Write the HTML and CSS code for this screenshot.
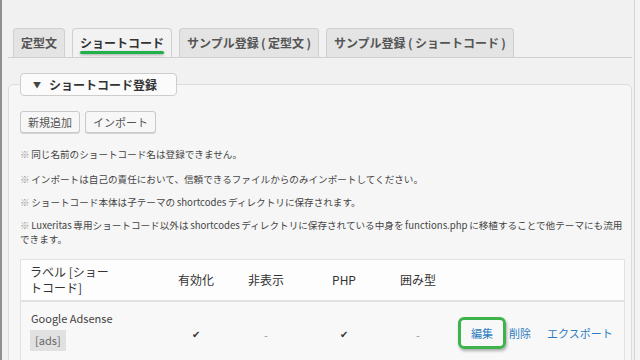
FILE: index.html
```html
<!DOCTYPE html>
<html lang="ja">
<head>
<meta charset="utf-8">
<title>Luxeritas 定型文登録</title>
<link rel="stylesheet" href="styles.css">
</head>
<body>
<div class="screen">
  <main class="main">
    <h1 class="title">Luxeritas 定型文登録</h1>
    <nav class="tabs">
      <a class="tab">定型文</a>
      <a class="tab active"><span class="tab-label">ショートコード</span></a>
      <a class="tab">サンプル登録&thinsp;(&thinsp;定型文&thinsp;)</a>
      <a class="tab">サンプル登録&thinsp;(&thinsp;ショートコード&thinsp;)</a>
    </nav>
    <section class="panel">
      <h2 class="panel-head"><span class="caret">▼</span>ショートコード登録</h2>
      <div class="buttons">
        <button class="btn">新規追加</button>
        <button class="btn">インポート</button>
      </div>
      <div class="notes">
        <p><span class="mark">※</span> 同じ名前のショートコード名は登録できません。</p>
        <p><span class="mark">※</span> インポートは自己の責任において、信頼できるファイルからのみインポートしてください。</p>
        <p><span class="mark">※</span> ショートコード本体は子テーマの shortcodes ディレクトリに保存されます。</p>
        <p><span class="mark">※</span> Luxeritas 専用ショートコード以外は shortcodes ディレクトリに保存されている中身を functions.php に移植することで他テーマにも流用できます。</p>
      </div>
      <div class="table">
        <div class="row head">
          <div class="cell label"><span class="label-text">ラベル [ショートコード]</span></div>
          <div class="cell center">有効化</div>
          <div class="cell center">非表示</div>
          <div class="cell center">PHP</div>
          <div class="cell center">囲み型</div>
          <div class="cell"></div>
        </div>
        <div class="row body">
          <div class="cell label top">
            <div class="name">Google Adsense</div>
            <code class="code">[ads]</code>
          </div>
          <div class="cell center check">✔</div>
          <div class="cell center dash">-</div>
          <div class="cell center check">✔</div>
          <div class="cell center dash">-</div>
          <div class="cell actions">
            <a class="link edit">編集</a>
            <a class="link">削除</a>
            <a class="link">エクスポート</a>
          </div>
        </div>
      </div>
    </section>
  </main>
  <div class="rail"></div>
</div>
</body>
</html>
```

FILE: styles.css
```css
html, body {
  margin: 0;
  height: 360px;
  overflow: hidden;
}
body {
  background: #f1f1f1;
  font-family: "Noto Sans CJK JP", sans-serif;
  color: #444;
}
.screen {
  display: flex;
  height: 360px;
  border-left: 2px solid #8f8f8f;
}
.main {
  flex: 1;
  min-width: 0;
  padding-left: 6px;
}
.rail {
  width: 5px;
  margin-left: 2px;
  border-left: 1px solid #d4d4d4;
  background: #f3f3f3;
}
.title {
  margin: -23px 0 0;
  font-size: 20px;
  line-height: 24px;
  font-weight: 600;
  color: #23282d;
}
.tabs {
  display: flex;
  gap: 7px;
  margin-top: 27px;
  padding-left: 5px;
  border-bottom: 1px solid #d0d0d0;
}
.tab {
  display: block;
  font-size: 12px;
  font-weight: bold;
  line-height: 18px;
  padding: 5px 7px;
  border: 1px solid #cfcfcf;
  border-bottom: none;
  border-radius: 4px 4px 0 0;
  background: #e4e4e4;
  color: #555;
  white-space: nowrap;
}
.tab.active {
  background: #f2f2f2;
  color: #333;
}
.tab-label {
  position: relative;
}
.tab-label::after {
  content: "";
  position: absolute;
  left: 0;
  right: 0;
  bottom: -3px;
  height: 3px;
  border-radius: 2px;
  background: #21b14b;
  box-shadow: 0 1px 3px rgba(0, 0, 0, 0.3);
}
.panel {
  margin-top: 26px;
  padding: 0 6px 0 11px;
  border: 1px solid #dcdcdc;
  border-radius: 5px;
  background: #f6f6f6;
  height: 400px;
}
.panel-head {
  display: flex;
  align-items: center;
  width: fit-content;
  margin: -12px 0 0;
  padding: 0 19px 0 12px;
  font-size: 12px;
  line-height: 21px;
  font-weight: bold;
  color: #333;
  background: #fbfbfb;
  border: 1px solid #cdcdcd;
  border-radius: 4px;
}
.caret {
  font-size: 8px;
  margin-right: 8px;
  color: #444;
}
.buttons {
  display: flex;
  gap: 5px;
  margin-top: 15px;
}
.btn {
  font-family: inherit;
  font-size: 11px;
  line-height: 20px;
  padding: 0 7px;
  border: 1px solid #c9c9c9;
  border-radius: 3px;
  background: #f7f7f7;
  color: #555;
  box-shadow: 0 1px 0 #d6d6d6;
}
.notes {
  margin-top: 14px;
}
.notes p {
  margin: 0 0 9px;
  font-size: 9.6px;
  line-height: 14px;
  word-spacing: -0.5px;
  color: #444;
}
.notes p:nth-child(2) {
  margin-top: 11px;
}
.notes p:last-child {
  margin-bottom: 0;
}
.mark {
  color: #999;
}
.table {
  margin-top: 13px;
  border: 1px solid #e2e2e2;
}
.row {
  display: grid;
  grid-template-columns: 139px 72px 68px 88px 60px 1fr;
  align-items: center;
}
.row.head {
  background: #fdfdfd;
  border-bottom: 2px solid #e2e2e2;
  font-size: 12px;
  line-height: 16px;
  color: #333;
  padding: 4px 0;
}
.row.body {
  background: #f8f8f8;
  min-height: 62px;
}
.cell.center {
  text-align: center;
}
.cell.label {
  padding-left: 9px;
}
.cell.top {
  align-self: start;
  padding-top: 8px;
}
.label-text {
  display: block;
  width: 80px;
}
.name {
  font-size: 11px;
  line-height: 16px;
  color: #444;
  padding-left: 1px;
}
.code {
  display: inline-block;
  margin-top: 3px;
  padding: 2px 5px;
  font-family: "Noto Sans CJK JP", sans-serif;
  font-size: 11px;
  line-height: 17px;
  background: #e1e1e1;
  color: #666;
}
.check {
  font-size: 10px;
  color: #333;
}
.dash {
  font-size: 11px;
  color: #999;
  padding-top: 4px;
}
.actions {
  display: flex;
  gap: 16px;
  padding-left: 23px;
}
.link {
  font-size: 11px;
  line-height: 16px;
  color: #2e7cbf;
}
.edit {
  position: relative;
}
.edit::after {
  content: "";
  position: absolute;
  inset: -8px -13px;
  border: 3px solid #3db44b;
  border-radius: 6px;
  box-shadow: 1px 2px 3px rgba(0, 0, 0, 0.3);
}
```
